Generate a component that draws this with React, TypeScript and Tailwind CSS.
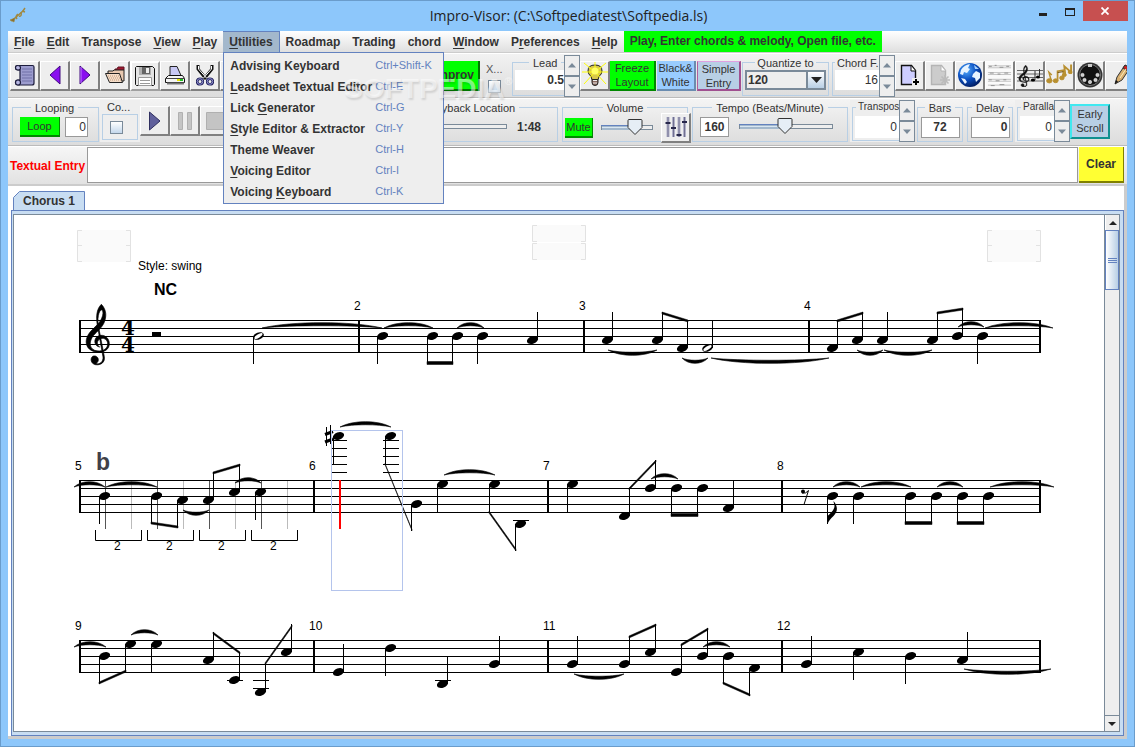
import type { ReactNode } from "react";
import { Copy, ClipboardPaste, Undo2, Redo2, Circle, Square, Settings, FileMusic } from "lucide-react";
import clsx from "clsx";

/* ---------- small swing-like widgets ---------- */

const ToolButton = ({ label, children, className }: { label: string; children: ReactNode; className?: string }) => (
    <button
        type="button"
        aria-label={label}
        className={clsx(
            "flex h-[30px] w-[30px] shrink-0 items-center justify-center border-t border-l border-r-2 border-b-2 border-t-white border-l-white border-r-[#808080] border-b-[#808080] bg-[#eeeeee]",
            className
        )}
    >
        {children}
    </button>
);

const Group = ({
    title,
    className,
    legendClass = "mx-auto px-1 text-[11px]",
    children,
}: {
    title: string;
    className?: string;
    legendClass?: string;
    children: ReactNode;
}) => (
    <fieldset className={clsx("min-w-0 shrink-0 border border-[#b8cfe5]", className)}>
        <legend className={clsx("leading-[14px] whitespace-nowrap", legendClass)}>{title}</legend>
        {children}
    </fieldset>
);

const Spinner = ({ label }: { label: string }) => (
    <div className="flex h-[42px] w-4 shrink-0 flex-col">
        <button type="button" aria-label={label + " up"} className="flex flex-1 items-center justify-center border border-[#7a8a99] bg-[#eeeeee]">
            <svg width="8" height="5" viewBox="0 0 8 5"><path d="M0 4.5 4 0l4 4.5z" fill="#7a8a99" /></svg>
        </button>
        <button type="button" aria-label={label + " down"} className="flex flex-1 items-center justify-center border border-[#7a8a99] bg-[#eeeeee]">
            <svg width="8" height="5" viewBox="0 0 8 5"><path d="M0 .5 4 5 8 .5z" fill="#7a8a99" /></svg>
        </button>
    </div>
);

const Field = ({ label, value, className }: { label: string; value: string; className?: string }) => (
    <input aria-label={label} defaultValue={value} className={clsx("block bg-white text-[12px] text-[#333333] outline-none", className)} />
);

const Check = ({ label }: { label: string }) => (
    <input
        type="checkbox"
        aria-label={label}
        className="block h-[13px] w-[13px] shrink-0 appearance-none border border-[#7a8a99] bg-linear-to-b from-white to-[#c4d8ec]"
    />
);

const Slider = ({ label, width, thumb }: { label: string; width: number; thumb: number }) => (
    <div className="relative h-[17px] shrink-0">
        <svg width={width} height="17" viewBox={`0 0 ${width} 17`} className="block">
            <rect x=".5" y="6.5" width={width - 1} height="4" fill="#eeeeee" stroke="#7a8a99" />
            <rect x="1" y="6" width={thumb} height="5" fill="#a3b8cc" />
            <path d={`M0 6.5h${thumb}`} stroke="#6382bf" />
            <path d={`M1 8.5h${thumb}`} stroke="#d9e6f2" />
            {thumb > 0 && (
                <path
                    d={`M${thumb - 7} 1.5 q0-1 1-1h12q1 0 1 1v7l-7 7-7-7z`}
                    fill="#e6eef6"
                    stroke="#333333"
                />
            )}
        </svg>
        <input type="range" aria-label={label} className="absolute inset-0 h-full w-full opacity-0" />
    </div>
);

/* ---------- menus ---------- */

// "&" goes before the mnemonic letter
const Mnemonic = ({ text }: { text: string }) => {
    const i = text.indexOf("&");
    if (i < 0 || text[i + 1] === " ") return <>{text}</>;
    return (
        <>
            {text.slice(0, i)}
            <span className="underline underline-offset-2">{text[i + 1]}</span>
            {text.slice(i + 2)}
        </>
    );
};

const utilities = [
    ["Advising Keyboard", "Ctrl+Shift-K"],
    ["&Leadsheet Textual Editor", "Ctrl-E"],
    ["Lick &Generator", "Ctrl-G"],
    ["&Style Editor & Extractor", "Ctrl-Y"],
    ["Theme Weaver", "Ctrl-H"],
    ["&Voicing Editor", "Ctrl-I"],
    ["Voicing &Keyboard", "Ctrl-K"],
];

const menus = ["&File", "&Edit", "Transpose", "&View", "&Play", "&Utilities", "Roadmap", "Trading", "chord", "&Window", "P&references", "&Help"];

const UtilitiesPopup = () => (
    <div role="menu" className="absolute top-[21px] left-0 z-20 w-[221px] border border-[#6382bf] bg-[#eeeeee] pt-[2px] pb-px">
        {utilities.map(([name, key]) => (
            <button key={name} type="button" role="menuitem" className="grid h-[21px] w-full grid-cols-[145px_1fr] items-center pl-[6px] text-left">
                <span className="text-[12px] font-bold whitespace-nowrap"><Mnemonic text={name} /></span>
                <span className="text-[11px] font-normal text-[#6382bf]">{key}</span>
            </button>
        ))}
        <div className="pointer-events-none absolute top-[20px] left-[120px] flex text-white/50">
            <span className="text-[28px] leading-8 font-bold [text-shadow:1px_2px_2px_rgba(0,0,0,0.12)]">SOFTPEDIA</span>
            <span className="text-[11px] leading-4 font-normal">®</span>
        </div>
    </div>
);

const MenuBar = () => (
    <nav className="flex h-[22px] shrink-0 border-b border-[#cccccc] bg-linear-to-b from-white to-[#dfdfdf] text-[12px] font-bold">
        {menus.map((m) =>
            m === "&Utilities" ? (
                <div key={m} className="relative">
                    <button type="button" className="h-[21px] border-t border-r border-[#6382bf] bg-[#a3b8cc] px-[6px] leading-[19px]"><Mnemonic text={m} /></button>
                    <UtilitiesPopup />
                </div>
            ) : (
                <button key={m} type="button" className="px-[6px]"><Mnemonic text={m} /></button>
            )
        )}
        <span className="h-[21px] bg-[#00ff00] px-[6px] leading-[21px] whitespace-nowrap">Play, Enter chords &amp; melody, Open file, etc.</span>
    </nav>
);

/* ---------- icons ---------- */

const LeadsheetIcon = () => (
    <svg width="22" height="22" viewBox="0 0 22 22" stroke="#1c1c3c" strokeWidth="1.2">
        <path d="M4 1.500h14.500q1.500 0 1.500 1.500v16q0 2-2 2H4q-2.500 0-2.500-2.500T4 16h2V6H4Q1.500 6 1.500 3.700T4 1.500z" fill="#9c9cce" />
        <path d="M4 1.500q2.500 0 2.500 2.300T4 6Q1.500 6 1.500 3.700T4 1.500zM4 16q2.500 0 2.500 2.500T4 21q-2.500 0-2.500-2.500T4 16z" fill="#b8b8e4" />
        <path d="M8 5h10M8 8h10M8 11h10M8 14h10M8 17h10" stroke="#7070a8" strokeWidth="1" />
    </svg>
);

const OpenIcon = () => (
    <svg width="22" height="20" viewBox="0 0 22 20">
        <path d="M11 5V4h2l1-2h6v3" fill="#a01830" stroke="#601020" />
        <path d="M4 8V6h5l1-1h10v11h-3z" fill="#e8c8b0" stroke="#222222" />
        <path d="M1.500 8.500h14l3 9h-13z" fill="#f4dcc8" stroke="#222222" />
        <path d="M4 11h11M5 13h11M6 15h11" stroke="#c09878" strokeDasharray="1 1" />
    </svg>
);

const SaveIcon = () => (
    <svg width="20" height="20" viewBox="0 0 20 20">
        <path d="M.5 1.500l1-1h16l2 2v16l-1 1h-17l-1-1z" fill="#e4e4e4" stroke="#111111" />
        <path d="M4 1h12v8H4z" fill="#b0b0b0" />
        <path d="M7 1h8v7H7z" fill="#666666" />
        <path d="M11 2h3v5h-3z" fill="#eeeeee" />
        <path d="M3.500 11.500h13v8h-13z" fill="#ffffff" stroke="#999999" />
        <path d="M5 14.500h10M5 17.500h10" stroke="#999999" />
    </svg>
);

const PrintIcon = () => (
    <svg width="20" height="20" viewBox="0 0 20 20">
        <path d="M5 10V1.500h7l4 9" fill="#c8c8f4" stroke="#222222" />
        <path d="M3.500 10.500h14l2 3v4h-19v-4z" fill="#f4f4f4" stroke="#111111" />
        <path d="M1 13.500h18" stroke="#444444" />
        <path d="M12 15h3" stroke="#e8e800" strokeWidth="2" />
        <path d="M15 15h3" stroke="#20c020" strokeWidth="2" />
        <path d="M2 18.500h17" stroke="#777777" strokeWidth="2" />
    </svg>
);

const ScissorsIcon = () => (
    <svg width="18" height="22" viewBox="0 0 18 22" fill="none">
        <path d="M2 1v4l8 10M16 1v4L8 15" stroke="#111111" strokeWidth="3" />
        <path d="M2.500 2v3l8 9M15.500 2v3l-8 9" stroke="#ffffff" strokeWidth="1" />
        <circle cx="4" cy="17.500" r="2.800" stroke="#20205c" strokeWidth="2.600" />
        <circle cx="14" cy="17.500" r="2.800" stroke="#20205c" strokeWidth="2.600" />
        <circle cx="4" cy="17.500" r="2.800" stroke="#9090d0" strokeWidth="1" />
        <circle cx="14" cy="17.500" r="2.800" stroke="#9090d0" strokeWidth="1" />
    </svg>
);

const BulbIcon = () => (
    <svg width="26" height="26" viewBox="0 0 26 26">
        <path d="M10 16v4.500q0 3 3 3t3-3V16z" fill="#8c6a60" stroke="#222222" />
        <path d="M11 18.500h4M11 21h4" stroke="#eeeeee" />
        <path d="M13 3q7 0 7 6 0 3-3 5.500l-1 3h-6l-1-3Q6 12 6 9q0-6 7-6z" fill="#d8c84a" stroke="#222222" />
        <path d="M13 10 2 1m11 9L24 1M13 10H0m13 0h13M13 10 2 22m11-12 11 12M13 10V0" stroke="#ffff00" />
        <circle cx="13" cy="9" r="3.500" fill="#ffff66" />
    </svg>
);

const PageIcon = ({ disabled }: { disabled?: boolean }) => (
    <svg width="22" height="24" viewBox="0 0 22 24">
        <path d="M2.500 2.500h10l4 5v14h-14z" fill={disabled ? "#cccccc" : "#ceceff"} stroke={disabled ? "#b4b4b4" : "#111111"} strokeWidth="1.400" />
        <path d="M12 3v5h4.500" fill="#ffffff" stroke={disabled ? "#b4b4b4" : "#111111"} />
        {disabled ? (
            <path d="M16 12v10M11 17h10M12.500 13.500l7 7M19.500 13.500l-7 7" stroke="#bbbbbb" strokeWidth="1.600" />
        ) : (
            <>
                <path d="M13 15h8v8h-8z" fill="#eeeeee" />
                <path d="M17 16v6M14 19h6" stroke="#000000" strokeWidth="2" />
            </>
        )}
    </svg>
);

const GlobeIcon = () => (
    <svg width="26" height="26" viewBox="0 0 26 26">
        <defs>
            <radialGradient id="sea" cx=".35" cy=".3" r=".8">
                <stop offset="0" stopColor="#58b0ff" />
                <stop offset=".5" stopColor="#0a4ec0" />
                <stop offset="1" stopColor="#001450" />
            </radialGradient>
        </defs>
        <circle cx="13" cy="13" r="12" fill="url(#sea)" />
        <path d="M4 8q3-5 9-6l-2 4 2 1-3 4-3-1-1 3-3-1zM16 12l3-3 4 2 0 5-4 4-1-4-3-1zM4 16l4 1 2 3-2 2z" fill="#e8f4ff" />
        <path d="M17 3l5 4-4 0z" fill="#a8d4ff" />
    </svg>
);

const SheetIcon = () => (
    <svg width="28" height="28" viewBox="0 0 28 28" stroke="#aaaaaa">
        <path d="M0 0h28v28H0z" fill="#fafafa" stroke="none" />
        <path d="M2 4.500h24M2 6.500h24M2 11.500h24M2 13.500h24M2 18.500h24M2 20.500h24M2 24.500h24" strokeWidth=".7" />
        <path d="M3 5h3M9 4h2M14 6h4M21 5h3M4 12h4M12 13h3M19 12h4M3 19h3M10 20h4M18 19h3M5 25h4M14 24h5" stroke="#909090" />
    </svg>
);

const CLEF =
    "M114 342C106 305 110 282 124 268C134 278 139 292 137 306C134 334 112 348 100 362C88 378 86 398 104 406C124 412 142 404 143 388C144 372 128 366 118 373C110 379 110 390 119 396C104 394 100 376 110 366C124 354 148 364 148 386C148 406 128 414 108 411C86 407 76 392 79 374C84 350 106 338 118 322C128 308 132 292 126 284C116 286 110 310 117 342L133 425C136 442 122 452 106 449C92 446 90 430 98 424C106 420 116 426 115 436C114 442 110 444 108 446C120 449 130 440 129 426Z";

const StaffIcon = () => (
    <svg width="26" height="24" viewBox="0 0 26 24">
        <path d="M0 7.500h26M0 11h26M0 14.500h26M0 18h26" stroke="#666666" />
        <g transform="translate(-10 -30) scale(.15 .12)" fill="#111111" stroke="#111111" strokeWidth="3">
            <path d={CLEF} />
        </g>
        <ellipse cx="16" cy="17" rx="2.200" ry="1.600" />
        <ellipse cx="21" cy="14" rx="2" ry="1.500" />
        <path d="M18 17V8M22.500 14V6" stroke="#333333" />
    </svg>
);

const GoldNotesIcon = () => (
    <svg width="28" height="24" viewBox="0 0 28 24" fill="#b89030" stroke="#b89030">
        <ellipse cx="3.500" cy="18" rx="2.800" ry="2.200" />
        <path d="M5.500 18 3 9l3 3" fill="none" strokeWidth="1.500" />
        <ellipse cx="10" cy="18" rx="2.500" ry="2" />
        <path d="M12 18V8l6-1v8" fill="none" strokeWidth="1.800" />
        <ellipse cx="16.500" cy="15" rx="2.300" ry="2" />
        <path d="M20 12 19 3l7 6V1" fill="none" strokeWidth="2" />
        <ellipse cx="19" cy="12" rx="2" ry="1.600" />
        <ellipse cx="25" cy="9" rx="2" ry="1.600" />
        <path d="M12 9.500l6-1" stroke="#705010" />
    </svg>
);

const MidiIcon = () => (
    <svg width="26" height="26" viewBox="0 0 26 26">
        <circle cx="13" cy="13" r="12.500" fill="#333333" />
        <circle cx="13" cy="13" r="10.500" fill="#111111" stroke="#777777" />
        <path d="M11 2h4v3h-4z" fill="#cccccc" />
        <g fill="#cccccc" stroke="#ffffff" strokeWidth=".5">
            <circle cx="5.500" cy="13" r="1.700" />
            <circle cx="7.500" cy="18" r="1.700" />
            <circle cx="13" cy="20" r="1.700" />
            <circle cx="18.500" cy="18" r="1.700" />
            <circle cx="20.500" cy="13" r="1.700" />
        </g>
    </svg>
);

const PencilIcon = () => (
    <svg width="24" height="24" viewBox="0 0 24 24">
        <path d="M7 21 9 14 17 2l5 3-8 12z" fill="#d8b070" stroke="#333333" />
        <path d="M17 2l5 3-2 3-5-3z" fill="#d02020" stroke="#333333" />
        <path d="M7 21l1-4 2 1.500z" fill="#111111" />
        <path d="M12 15l6-9" stroke="#fff0c0" />
    </svg>
);

const MixerIcon = () => (
    <svg width="22" height="26" viewBox="0 0 22 26">
        <path d="M3 3v20M8.500 3v20M14 3v20M19.500 3v20" stroke="#b0b0c8" strokeWidth="3" />
        <path d="M3 3v20M8.500 3v20M14 3v20M19.500 3v20" stroke="#707090" />
        <path d="M.5 9h5M6 14h5M11.500 21h5M17 8h5" stroke="#28284c" strokeWidth="2" />
    </svg>
);

/* ---------- toolbars ---------- */

const FileToolbar = () => (
    <div className="flex h-[45px] shrink-0 items-center overflow-hidden border-t border-b border-t-white border-b-[#bbbbbb] bg-linear-to-b from-[#f2f2f2] to-[#dcdcdc] pl-[2px]">
        <ToolButton label="Open leadsheet editor"><LeadsheetIcon /></ToolButton>
        <ToolButton label="Previous file">
            <svg width="12" height="20" viewBox="0 0 12 20"><path d="M11 1v18L1 10z" fill="#8a10f0" stroke="#400880" /></svg>
        </ToolButton>
        <ToolButton label="Next file">
            <svg width="12" height="20" viewBox="0 0 12 20"><path d="M1 1v18l10-9z" fill="#8a10f0" stroke="#400880" /><path d="M2 2v16" stroke="#c080ff" /></svg>
        </ToolButton>
        <ToolButton label="Open"><OpenIcon /></ToolButton>
        <ToolButton label="Save" className="border-t-2 border-l-2 border-t-[#909090] border-l-[#909090] border-r-[#a0a0a0] border-b-[#a0a0a0]"><SaveIcon /></ToolButton>
        <ToolButton label="Print"><PrintIcon /></ToolButton>
        <ToolButton label="Cut"><ScissorsIcon /></ToolButton>
        <ToolButton label="Copy"><Copy size={20} /></ToolButton>
        <ToolButton label="Paste"><ClipboardPaste size={20} /></ToolButton>
        <ToolButton label="Undo"><Undo2 size={20} /></ToolButton>
        <ToolButton label="Redo"><Redo2 size={20} /></ToolButton>
        <ToolButton label="Settings"><Settings size={20} /></ToolButton>
        <ToolButton label="Score"><FileMusic size={20} /></ToolButton>
        <ToolButton label="Generate"><Circle size={20} /></ToolButton>
        <button type="button" className="h-[30px] w-[50px] shrink-0 border-r-2 border-b-2 border-[#007700] bg-[#00ff00] text-[12px] font-bold">Improv</button>
        <div className="flex h-9 w-8 shrink-0 flex-col overflow-hidden pl-2">
            <span className="-ml-[2px] text-[11px] leading-[22px] text-[#555555]">X...</span>
            <Check label="Use X" />
        </div>
        <Group title="Lead" className="h-[40px] w-[52px] border-r-0" legendClass="ml-4 px-1 text-[11px]">
            <Field label="Lead" value="0.5" className="ml-[2px] h-5 w-[49px] text-right font-bold" />
        </Group>
        <Spinner label="Lead" />
        <ToolButton label="Advice" className="w-[29px]"><BulbIcon /></ToolButton>
        <button type="button" className="h-[30px] w-[46px] shrink-0 border-r-2 border-b-2 border-[#008800] bg-[#00ff00] text-[11px] leading-[14px]">Freeze Layout</button>
        <button type="button" className="ml-px h-[30px] w-[39px] shrink-0 border-r-2 border-b-2 border-[#6a8cb0] bg-[#99ccff] text-[11px] leading-[14px]">Black&amp; White</button>
        <button type="button" className="ml-px h-[30px] w-[44px] shrink-0 border border-r-2 border-b-2 border-t-[#e0a0e0] border-l-[#b060a0] border-r-[#a05090] border-b-[#a05090] bg-[#b8cfe5] text-[11px] leading-[14px]">Simple Entry</button>
        <Group title="Quantize to" className="mr-[3px] ml-px h-[40px] w-[87px]" legendClass="mx-auto px-[2px] text-[11px]">
            <div className="relative mx-[2px] h-5">
                <select aria-label="Quantize to" className="block h-5 w-full appearance-none border-2 border-[#7a8a99] bg-[#eeeeee] pl-px text-[12px] leading-4 font-bold">
                    <option>120</option>
                </select>
                <span className="pointer-events-none absolute top-0 right-0 flex h-5 w-5 items-center justify-center border-2 border-[#7a8a99] bg-linear-to-b from-white to-[#b8cfe5]">
                    <svg width="11" height="6" viewBox="0 0 11 6"><path d="M0 0h11L5.500 6z" fill="#222222" /></svg>
                </span>
            </div>
        </Group>
        <Group title="Chord F." className="h-[40px] w-[47px] border-r-0" legendClass="ml-[2px] px-[2px] text-[11px]">
            <Field label="Chord font" value="16" className="ml-[2px] h-5 w-[44px] pr-px text-right" />
        </Group>
        <Spinner label="Chord font" />
        <ToolButton label="New tab"><PageIcon /></ToolButton>
        <ToolButton label="Delete tab"><PageIcon disabled /></ToolButton>
        <ToolButton label="Web"><GlobeIcon /></ToolButton>
        <ToolButton label="Roadmap"><SheetIcon /></ToolButton>
        <ToolButton label="Notate"><StaffIcon /></ToolButton>
        <ToolButton label="Style"><GoldNotesIcon /></ToolButton>
        <ToolButton label="Midi"><MidiIcon /></ToolButton>
        <ToolButton label="Draw"><PencilIcon /></ToolButton>
    </div>
);

const PlayToolbar = () => (
    <div className="flex h-12 shrink-0 items-center overflow-hidden border-t border-b border-t-white border-b-[#bbbbbb] bg-linear-to-b from-[#f4f4f4] to-[#dcdcdc] pb-[2px] pl-[4px]">
        <Group title="Looping" className="mr-px h-[41px] w-[87px]" legendClass="ml-[18px] px-1 text-[11px]">
            <div className="flex gap-[5px] pt-[2px] pl-[7px]">
                <button type="button" className="h-5 w-10 border-r border-b-2 border-[#008800] bg-[#00ff00] text-[11px] leading-4">Loop</button>
                <Field label="Loop count" value="0" className="h-5 w-[23px] border border-[#999999] pr-px text-right" />
            </div>
        </Group>
        <div className="h-[42px] w-10 shrink-0 bg-[#eeeeee] px-[2px]">
            <span className="block pl-[5px] text-[11px] leading-[14px]">Co...</span>
            <div className="flex h-[26px] items-center border border-[#b8cfe5] pl-[7px]">
                <Check label="Countin" />
            </div>
        </div>
        <ToolButton label="Play">
            <svg width="14" height="20" viewBox="0 0 14 20"><path d="M1.500 1v18L12 10z" fill="#60609c" stroke="#303060" /></svg>
        </ToolButton>
        <ToolButton label="Pause">
            <svg width="16" height="18" viewBox="0 0 16 18" fill="#c4c4c4" stroke="#b0b0b0"><path d="M1.500.5h4v17h-4zM10.500.5h4v17h-4z" /></svg>
        </ToolButton>
        <ToolButton label="Stop">
            <svg width="18" height="18" viewBox="0 0 18 18"><path d="M.5.5h17v17H.5z" fill="#c4c4c4" stroke="#b0b0b0" /></svg>
        </ToolButton>
        <ToolButton label="Record"><Circle size={18} /></ToolButton>
        <ToolButton label="Step"><Square size={18} /></ToolButton>
        <ToolButton label="Back"><Undo2 size={18} /></ToolButton>
        <ToolButton label="Ahead"><Redo2 size={18} /></ToolButton>
        <ToolButton label="Tracker"><Settings size={18} /></ToolButton>
        <Group title="Playback Location" className="mr-[4px] ml-[3px] h-[41px] w-[175px]">
            <div className="flex h-6 items-center gap-[10px] pl-[6px]">
                <Slider label="Playback location" width={117} thumb={0} />
                <span className="text-[12px] font-bold">1:48</span>
            </div>
        </Group>
        <Group title="Volume" className="mr-[4px] h-[41px] w-[126px]">
            <div className="flex h-[26px] items-center pl-[2px]">
                <button type="button" className="h-5 w-7 shrink-0 border-r border-b-2 border-[#008800] bg-[#00ff00] text-[11px] leading-4">Mute</button>
                <div className="ml-2"><Slider label="Volume" width={52} thumb={34} /></div>
                <ToolButton label="Mixer" className="ml-2 w-[26px]"><MixerIcon /></ToolButton>
            </div>
        </Group>
        <Group title="Tempo (Beats/Minute)" className="mr-[2px] h-[41px] w-[156px]">
            <div className="flex items-center gap-[10px] pt-[2px] pl-[7px]">
                <Field label="Tempo" value="160" className="h-5 w-[29px] border border-[#999999] text-center font-bold" />
                <Slider label="Tempo" width={94} thumb={46} />
            </div>
        </Group>
        <div className="mr-[2px] flex h-[42px] shrink-0 bg-[#eeeeee] pl-[2px]">
            <Group title="Transpos" className="h-[41px] w-[47px] border-r-0" legendClass="ml-[3px] pl-[2px] text-[10px]">
                <Field label="Transposition" value="0" className="mt-[2px] ml-[2px] h-[22px] w-[44px] pr-[2px] text-right" />
            </Group>
            <Spinner label="Transposition" />
        </div>
        <Group title="Bars" className="mr-[4px] h-[41px] w-[46px]">
            <Field label="Bars" value="72" className="mx-auto mt-[2px] h-[21px] w-[39px] border border-[#999999] text-center font-bold" />
        </Group>
        <Group title="Delay" className="mr-[2px] h-[41px] w-[46px]">
            <Field label="Delay" value="0" className="mx-auto mt-[2px] h-[21px] w-[39px] border border-[#999999] pr-px text-right font-bold" />
        </Group>
        <div className="flex h-[42px] shrink-0 bg-[#eeeeee] pl-[2px]">
            <Group title="Paralla" className="h-[41px] w-[37px] border-r-0" legendClass="ml-[3px] pl-[2px] text-[10px]">
                <Field label="Parallax" value="0" className="mt-[2px] ml-[2px] h-[22px] w-[34px] pr-[2px] text-right" />
            </Group>
            <Spinner label="Parallax" />
        </div>
        <button type="button" className="h-[35px] w-10 shrink-0 border-2 border-t-[#40e8f0] border-r-[#109090] border-b-[#109090] border-l-[#40e8f0] bg-[#b8cfe5] text-[11px] leading-[14px]">Early Scroll</button>
    </div>
);

/* ---------- score ---------- */

// x, y of the head and y of the stem end
type Note = [number, number, number];

const notes: Note[] = [
    [382, 336, 364], [432, 336, 364], [457, 336, 364], [482, 336, 364], [532, 340, 312],
    [607, 340, 312], [657, 340, 312], [682, 348, 320],
    [832, 348, 320], [857, 340, 312], [882, 340, 312], [932, 340, 312], [957, 336, 308], [982, 336, 364],
    [104, 496, 524], [156, 496, 524], [182, 500, 528], [208, 500, 472], [234, 492, 464], [260, 492, 520],
    [338, 436, 464], [390, 436, 464], [416, 504, 531], [442, 484, 512], [494, 484, 512], [520, 524, 551],
    [572, 484, 512], [624, 516, 488], [650, 488, 460], [676, 488, 516], [702, 488, 516], [728, 508, 480],
    [832, 496, 524], [858, 496, 524], [910, 496, 524], [936, 496, 524], [962, 496, 524], [988, 496, 524],
    [104, 656, 684], [130, 644, 672], [156, 644, 672], [208, 660, 632], [234, 680, 652], [260, 692, 664], [286, 652, 624],
    [338, 672, 644], [390, 648, 676], [442, 684, 656], [494, 664, 636],
    [572, 664, 636], [624, 664, 636], [650, 652, 624], [676, 672, 644], [702, 656, 628], [728, 656, 684], [754, 668, 696],
    [806, 664, 636], [858, 652, 680], [910, 656, 684], [962, 660, 632],
];

const halfNotes: Note[] = [[258, 336, 364], [707, 348, 320]];

// x1, y1, x2, y2, thickness
const beams = [
    [427, 363, 453, 363, 3], [662, 313, 688, 321, 2], [837, 321, 863, 313, 2], [937, 313, 963, 309, 2],
    [151, 523, 178, 527, 2], [213, 473, 240, 465, 2], [385, 464, 412, 530, 1], [489, 512, 516, 550, 2],
    [629, 489, 656, 461, 2], [671, 515, 698, 515, 3], [905, 523, 932, 523, 3], [957, 523, 984, 523, 3],
    [99, 683, 126, 671, 2], [213, 633, 240, 653, 2], [265, 664, 292, 626, 2], [629, 637, 656, 625, 2],
    [681, 645, 708, 629, 2], [723, 683, 750, 695, 2],
];

// x1, x2, y, bulge (negative goes up)
const ties = [
    [262, 382, 328, -5], [384, 433, 328, -5], [457, 484, 328, -5], [608, 657, 350, 5], [682, 708, 358, 5], [711, 829, 358, 5],
    [857, 883, 350, 5], [884, 932, 350, 5], [958, 984, 327, -5], [985, 1053, 328, -5],
    [74, 105, 487, -5], [106, 157, 487, -5], [183, 209, 510, 5], [235, 261, 483, -5], [340, 391, 427, -5], [444, 495, 475, -5],
    [651, 678, 479, -5], [833, 860, 487, -5], [861, 911, 487, -5], [937, 963, 487, -5], [990, 1054, 487, -5],
    [74, 106, 647, -5], [131, 158, 635, -5], [574, 624, 674, 5], [703, 730, 647, -5], [964, 1051, 669, 5],
];

const ledgers = [
    [331, 440], [331, 448], [331, 456], [331, 464], [331, 472],
    [383, 440], [383, 448], [383, 456], [383, 464], [383, 472],
    [513, 520], [227, 680], [253, 680], [253, 688], [435, 680],
];

const staves = [
    { y: 320, bars: [359, 584, 809], first: 1 },
    { y: 480, bars: [314, 548, 782], first: 5 },
    { y: 640, bars: [314, 548, 782], first: 9 },
];

const Stem = ({ note: [x, y, end] }: { note: Note }) => (
    <path d={`M${end > y ? x - 4.5 : x + 5.5} ${y}V${end}`} stroke="#000000" />
);

const EmptyBox = ({ x, y, h, split }: { x: number; y: number; h: number; split?: boolean }) => (
    <g fill="none" stroke="#e2e2e2">
        <rect x={x} y={y} width="54" height={h} fill="#fafafa" stroke="none" />
        <path d={`M${x + 5} ${y + 0.5}h-4.500v${h - 1}h4.500M${x + 49} ${y + 0.5}h4.500v${h - 1}h-4.500`} />
        {split && <path d={`M${x} ${y + 15.5}h5M${x + 49} ${y + 15.5}h5`} />}
    </g>
);

const Score = () => (
    <svg width="1090" height="516" viewBox="14 215 1090 516" className="block shrink-0 font-['Liberation_Sans',Arial,sans-serif]" fontSize="12">
        <EmptyBox x={77} y={230} h={32} split />
        <EmptyBox x={532} y={225} h={17} />
        <EmptyBox x={532} y={243} h={17} />
        <EmptyBox x={987} y={230} h={32} split />
        <text x="138" y="270">Style: swing</text>
        <text x="154" y="295" fontSize="16" fontWeight="bold">NC</text>

        {/* subdivision guides of measure 5 */}
        {[105, 131, 157, 183, 209, 235, 261, 287].map((x, i) => (
            <path key={x} d={`M${x + 0.5} 480v49`} stroke={i % 2 ? "#bbbbbb" : "#555555"} />
        ))}
        {[95, 147, 199, 251].map((x) => (
            <g key={x}>
                <path d={`M${x + 0.5} 530v10.500h46v-10.500`} fill="none" stroke="#000000" />
                <text x={x + 19} y="550">2</text>
            </g>
        ))}

        {staves.map(({ y, bars, first }) => (
            <g key={y}>
                {[0, 8, 16, 24, 32].map((d) => (
                    <path key={d} d={`M79 ${y + d + 0.5}h962`} stroke="#000000" />
                ))}
                {[80, ...bars, 1040].map((x) => (
                    <path key={x} d={`M${x} ${y}v33`} stroke="#000000" strokeWidth="2" />
                ))}
                {first > 1 && <text x="75" y={y - 10}>{first}</text>}
                {bars.map((x, i) => (
                    <text key={x} x={x - 5} y={y - 10}>{first + i + 1}</text>
                ))}
            </g>
        ))}

        <path transform="translate(60 215) scale(.3333)" d={CLEF} stroke="#000000" strokeWidth="2" />
        <g fontFamily="DejaVu Serif, serif" fontWeight="bold" fontSize="20">
            <text x="121" y="335">4</text>
            <text x="121" y="352">4</text>
        </g>
        <path d="M152 332h9v4h-9z" />

        {ledgers.map(([x, y]) => (
            <path key={`${x}-${y}`} d={`M${x} ${y + 0.5}h16`} stroke="#000000" />
        ))}
        {notes.map((n) => (
            <g key={n.join("-")}>
                <ellipse cx={n[0] + 0.5} cy={n[1]} rx="5.800" ry="3.700" transform={`rotate(-20 ${n[0] + 0.5} ${n[1]})`} />
                <Stem note={n} />
            </g>
        ))}
        {halfNotes.map((n) => (
            <g key={n.join("-")}>
                <ellipse cx={n[0] + 0.5} cy={n[1]} rx="5.500" ry="3.500" transform={`rotate(-20 ${n[0] + 0.5} ${n[1]})`} />
                <ellipse cx={n[0] + 0.5} cy={n[1]} rx="4.700" ry="1.700" fill="#ffffff" transform={`rotate(-32 ${n[0] + 0.5} ${n[1]})`} />
                <Stem note={n} />
            </g>
        ))}
        {beams.map(([x1, y1, x2, y2, w]) => (
            <path key={`${x1}-${y1}`} d={`M${x1} ${y1 - w / 2}L${x2} ${y2 - w / 2}v${w}L${x1} ${y1 + w / 2}z`} stroke="#000000" strokeWidth=".5" />
        ))}
        {ties.map(([x1, x2, y, b]) => {
            const q = (x2 - x1) / 4;
            const outer = y + b * 1.33 + Math.sign(b) * 0.5;
            const inner = y + b * 0.6;
            return (
                <path
                    key={`${x1}-${y}`}
                    d={`M${x1} ${y}C${x1 + q} ${outer} ${x2 - q} ${outer} ${x2} ${y}C${x2 - q} ${inner} ${x1 + q} ${inner} ${x1} ${y}z`}
                    stroke="#000000"
                    strokeWidth=".6"
                />
            );
        })}

        {/* eighth rest and the flag after it */}
        <circle cx="803" cy="491.500" r="2" />
        <path d="M802 493q4 1 6.500-2.500L804 504.500" fill="none" stroke="#000000" />
        <path d="M827.500 524v-8c3-3 7-6 7-10 0-2-1-3-1-5 5 6 4 11 0 15-3 3-5 5-6 8z" />

        {/* sharp */}
        <path d="M326.500 427v19M330.500 425v19" stroke="#000000" />
        <path d="M325 434.500l8-3M325 442l8-3" stroke="#000000" strokeWidth="3" />

        <text x="96" y="470" fontSize="23" fontWeight="bold" fill="#404048">b</text>
        <path d="M340 480v49" stroke="#ff0000" strokeWidth="2" />
        <rect x="331.500" y="430.500" width="71" height="160" fill="none" stroke="#b4c4ec" />
    </svg>
);

const ScrollBar = () => (
    <div className="flex w-[15px] shrink-0 flex-col border-l border-[#7a8a99] bg-[#eeeeee]">
        <button type="button" aria-label="Scroll up" className="flex h-[15px] items-center justify-center border-l border-white bg-[#eeeeee]">
            <svg width="8" height="4" viewBox="0 0 8 4"><path d="M0 4 4 0l4 4z" fill="#222222" /></svg>
        </button>
        <div className="flex h-[60px] flex-col items-center justify-center gap-px border border-[#6382bf] bg-linear-to-r from-white to-[#b8cfe5]">
            <span className="h-px w-[9px] bg-[#6382bf]" />
            <span className="h-px w-[9px] bg-[#6382bf]" />
            <span className="h-px w-[9px] bg-[#6382bf]" />
        </div>
        <div className="flex-1" />
        <button type="button" aria-label="Scroll down" className="flex h-4 items-center justify-center border-t border-[#7a8a99] bg-[#eeeeee]">
            <svg width="8" height="4" viewBox="0 0 8 4"><path d="M0 0h8L4 4z" fill="#222222" /></svg>
        </button>
    </div>
);

/* ---------- window ---------- */

const TitleBar = () => (
    <header className="flex h-[30px] shrink-0 items-start justify-between">
        <div className="w-[90px] pt-[6px] pl-[2px]">
            <svg width="16" height="16" viewBox="0 0 16 16" fill="none" stroke="#a08840">
                <path d="M1 14 5 11l8-7 2-3" strokeWidth="1.500" />
                <path d="M0 13l4 2 1-4z" fill="#887030" strokeWidth=".6" />
                <path d="M7 12q-2-3 1-5M9 9q3 1 2-4M12 4l3 1" strokeWidth="1.500" />
            </svg>
        </div>
        <h1 className="pt-[4px] font-['Open_Sans',sans-serif] text-[14px] leading-[22px] whitespace-nowrap text-[#222222]">
            Impro-Visor: (C:\Softpediatest\Softpedia.ls)
        </h1>
        <div className="-mr-px flex items-start">
            <button type="button" aria-label="Minimize" className="flex h-[19px] w-[26px] items-center">
                <svg width="8" height="10" viewBox="0 0 8 10"><path d="M0 7h8v3H0z" fill="#222222" /></svg>
            </button>
            <button type="button" aria-label="Maximize" className="flex h-[21px] w-[18px] items-center">
                <svg width="10" height="8" viewBox="0 0 10 8"><path d="M0 0h10v8H0zM1 2v5h8V2z" fill="#222222" fillRule="evenodd" /></svg>
            </button>
            <button type="button" aria-label="Close" className="flex h-5 w-[45px] items-center justify-center bg-[#c75050]">
                <svg width="8" height="8" viewBox="0 0 8 8"><path d="M.5.5l7 7M7.500.5l-7 7" stroke="#ffffff" strokeWidth="1.800" /></svg>
            </button>
        </div>
    </header>
);

export default function App() {
    return (
        <div className="flex h-screen flex-col overflow-hidden border border-[#6a9ccb] bg-[#8dc7fb] px-[7px] pb-[7px] font-['Liberation_Sans',Arial,sans-serif] text-[#333333]">
            <TitleBar />
            <main className="flex min-h-0 flex-1 flex-col bg-[#eeeeee]">
                <MenuBar />
                <FileToolbar />
                <PlayToolbar />
                <div className="flex h-10 shrink-0 border-t border-b-2 border-t-white border-b-[#cccccc] bg-linear-to-b from-[#f6f6f6] to-[#e2e2e2] pr-[3px] pb-px pl-[2px]">
                    <label htmlFor="entry" className="w-[77px] text-[12px] leading-[38px] font-bold whitespace-nowrap text-[#ff0000]">Textual Entry</label>
                    <input id="entry" className="min-w-0 flex-1 border border-[#999999] bg-white px-1 text-[12px] outline-none" />
                    <button type="button" className="ml-px w-[45px] border-r border-b-2 border-[#808000] bg-[#ffff33] text-[12px] font-bold">Clear</button>
                </div>
                <div className="flex min-h-0 flex-1 flex-col border-r-[3px] border-b-[3px] border-r-[#cccccc] border-b-[#cccccc] bg-white pt-[5px] pl-[3px]">
                    <div className="flex pl-[2px]">
                        <button type="button" className="relative h-[19px] w-[72px] text-[12px] leading-[20px] font-bold">
                            <svg width="72" height="19" viewBox="0 0 72 19" className="absolute inset-0">
                                <path d="M.5 19V6.500l6-6h65V19" fill="#c8ddf2" stroke="#6382bf" />
                            </svg>
                            <span className="relative">Chorus 1</span>
                        </button>
                    </div>
                    <div className="flex min-h-0 flex-1 border border-[#6382bf] bg-[#c8ddf2] pt-[3px] pr-[3px] pb-[3px] pl-px">
                        <div className="flex min-w-0 flex-1 border border-[#7a8a99] bg-white">
                            <div className="min-w-0 flex-1 overflow-hidden"><Score /></div>
                            <ScrollBar />
                        </div>
                    </div>
                </div>
            </main>
        </div>
    );
}
